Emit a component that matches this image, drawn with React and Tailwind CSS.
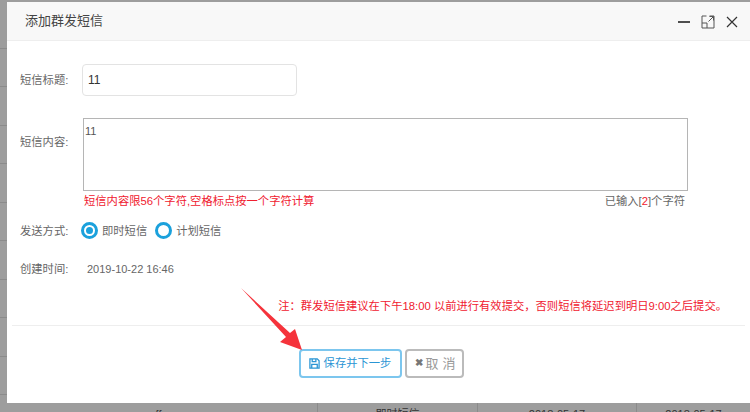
const font = "font-['Liberation_Sans','Noto_Sans_CJK_SC',sans-serif]";

const rows = [0, 1, 2, 3, 4, 5, 6, 7, 8, 9];

function Radio({ checked, label }) {
  return (
    <label className="flex items-center">
      <span className="w-[17px] h-[17px] rounded-full border-[3px] border-[#1ba1dc] flex items-center justify-center">
        {checked && <span className="w-[7px] h-[7px] rounded-full bg-[#1ba1dc]" />}
      </span>
      <span className="ml-[4px] mt-[2px] text-[11.3px] text-[#666]">{label}</span>
    </label>
  );
}

export default function App() {
  return (
    <div className={`relative h-[412px] w-[750px] overflow-hidden bg-[#9d9d9d] ${font}`}>
      {/* table behind the dialog */}
      <div className="flex flex-col pt-[10px] text-[11px] text-[#333]">
        {rows.map((r) => (
          <div key={r} className="flex h-[38.5px] shrink-0 border-b border-[#8b8b8b]">
            <div className="w-[318px] border-r border-[#8b8b8b]" />
            <div className="w-[160px] border-r border-[#8b8b8b]" />
            <div className="w-[159px] border-r border-[#8b8b8b]" />
          </div>
        ))}
        <div className="flex h-[38px] shrink-0 items-center">
          <div className="w-[318px] border-r border-[#8b8b8b] text-center leading-[38px]">ff</div>
          <div className="w-[160px] border-r border-[#8b8b8b] text-center leading-[38px]">即时短信</div>
          <div className="w-[159px] border-r border-[#8b8b8b] text-center leading-[38px]">2018-05-17</div>
          <div className="flex-1 text-center leading-[38px]">2018-05-17</div>
        </div>
      </div>

      <div className="absolute left-[7px] top-[2px] flex h-[401px] w-[743px] flex-col bg-white">
        <div className="flex h-[39px] shrink-0 items-center justify-between border-b border-[#eee] bg-[#f8f8f8] pl-[18px] pr-[11px]">
          <h3 className="text-[13px] text-[#444]">添加群发短信</h3>
          <div className="mt-[1px] flex items-center gap-[10px]">
            <svg width="14" height="14" viewBox="0 0 14 14"><path d="M1 7h12" stroke="#222" strokeWidth="1.6" /></svg>
            <svg width="14" height="14" viewBox="0 0 14 14" fill="none" stroke="#555" strokeWidth="1"><path d="M5.5 1H1v12h12V1H8.5M1 8h5v5M7.5 6.5 12 2M8.5 1.5h4v4" /></svg>
            <svg width="14" height="14" viewBox="0 0 14 14"><path d="M2 2l10 10M12 2 2 12" stroke="#333" strokeWidth="1.2" /></svg>
          </div>
        </div>

        <div className="flex flex-1 flex-col text-[11.3px] text-[#666]">
          <div className="mt-[23px] flex items-center">
            <span className="w-[75px] pl-[13px]">短信标题:</span>
            <input readOnly value="11" className="h-[32px] w-[215px] rounded-[4px] border border-[#e3e3e3] px-[5px] text-[12px] text-[#333] outline-none" />
          </div>
          <div className="mt-[22px] flex">
            <span className="w-[76px] pl-[13px] pt-[16px]">短信内容:</span>
            <div className="w-[605px]">
              <textarea readOnly value="11" className="block h-[73px] w-full resize-none border border-[#b5b5b5] px-[1px] py-[5px] text-[11px] leading-[15px] text-[#555] outline-none" />
              <div className="mt-[2px] flex justify-between leading-[16px]">
                <span className="pl-[1px] text-[#f0202f]">短信内容限56个字符,空格标点按一个字符计算</span>
                <span className="pr-[3px]">已输入[<span className="text-[#f0202f]">2</span>]个字符</span>
              </div>
            </div>
          </div>
          <div className="mt-[12px] flex items-center">
            <span className="w-[74px] pl-[13px] pt-[2px]">发送方式:</span>
            <div className="flex gap-[8px]">
              <Radio checked label="即时短信" />
              <Radio label="计划短信" />
            </div>
          </div>
          <div className="mt-[21px] flex items-center">
            <span className="w-[80px] pl-[13px]">创建时间:</span>
            <span className="text-[11px]">2019-10-22 16:46</span>
          </div>
          <p className="mt-[20px] pr-[23px] text-right text-[#f0202f]">注：群发短信建议在下午18:00 以前进行有效提交，否则短信将延迟到明日9:00之后提交。</p>
          <div className="ml-[5px] mr-[5px] mt-[10px] border-t border-[#eee]" />
          <div className="mt-[23px] flex justify-center gap-[3px] pl-[5px]">
            <button className="flex h-[29px] w-[103px] items-center justify-center gap-[4px] rounded-[4px] border-2 border-[#7cc6ee] text-[11.3px] text-[#2a95d4]">
              <svg width="11" height="11" viewBox="0 0 12 12" fill="none" stroke="#2a95d4" strokeWidth="1.4"><path d="M1 1h8l2 2v8H1zM3.5 1v3h4V1M3 11V7h6v4" /></svg>
              保存并下一步
            </button>
            <button className="flex h-[29px] w-[59px] items-center gap-[3px] rounded-[4px] border-2 border-[#bbb] pl-[8px] text-[13px] text-[#999]">
              <span className="text-[10px] font-bold leading-none text-[#777]">✖</span>
              <span className="tracking-[4px]">取消</span>
            </button>
          </div>
        </div>
      </div>

      {/* red annotation arrow */}
      <svg className="absolute left-[238px] top-[285px]" width="66" height="66" viewBox="0 0 66 66">
        <path d="M3 3 L52 48 L57 44 L64 65 L42 57 L48 52 Z" fill="#f5333b" />
      </svg>
    </div>
  );
}
